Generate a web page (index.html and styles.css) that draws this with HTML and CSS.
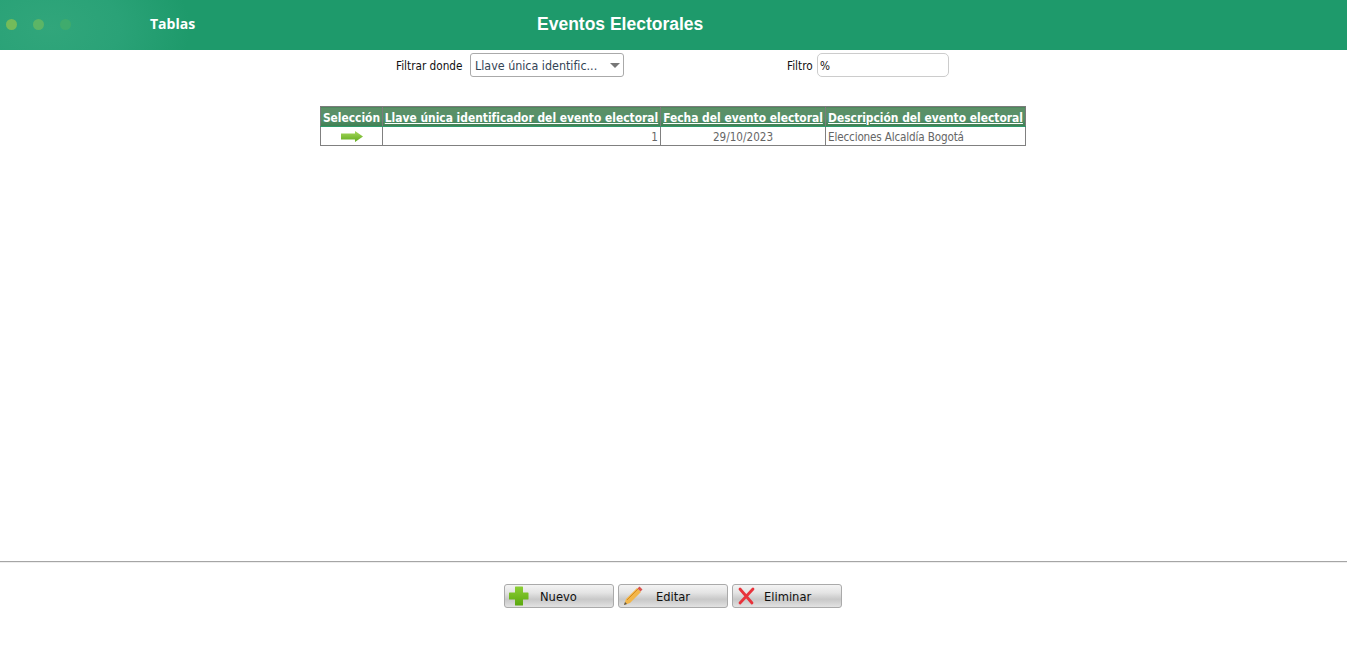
FILE: index.html
```html
<!DOCTYPE html>
<html lang="es">
<head>
<meta charset="utf-8">
<title>Eventos Electorales</title>
<link rel="stylesheet" href="styles.css">
</head>
<body>
<header class="topbar">
  <div class="dots"><span class="dot d1"></span><span class="dot d2"></span><span class="dot d3"></span></div>
  <span class="menu">Tablas</span>
  <h1 class="title">Eventos Electorales</h1>
</header>
<main class="main">
  <div class="filters">
    <label class="flabel">Filtrar donde</label>
    <div class="select"><span>Llave única identific...</span><i class="caret"></i></div>
    <label class="flabel second">Filtro</label>
    <div class="input">%</div>
  </div>
  <table class="grid">
    <thead>
      <tr>
        <th class="c1">Selección</th>
        <th class="c2"><u>Llave única identificador del evento electoral</u></th>
        <th class="c3"><u>Fecha del evento electoral</u></th>
        <th class="c4"><u>Descripción del evento electoral</u></th>
      </tr>
    </thead>
    <tbody>
      <tr>
        <td class="center"><svg class="arrow" width="22" height="11" viewBox="0 0 22 11"><defs><linearGradient id="ag" x1="0" y1="0" x2="0" y2="1"><stop offset="0" stop-color="#a6d85c"/><stop offset="1" stop-color="#62ab1e"/></linearGradient></defs><path d="M0 2.500h14V0l8 5.500-8 5.500V8.500H0z" fill="url(#ag)"/></svg></td>
        <td class="right">1</td>
        <td class="center">29/10/2023</td>
        <td class="desc">Elecciones Alcaldía Bogotá</td>
      </tr>
    </tbody>
  </table>
</main>
<footer class="footer">
  <button class="btn"><svg class="ico" width="20" height="20" viewBox="0 0 20 20"><defs><linearGradient id="pg" x1="0" y1="0" x2="0" y2="1"><stop offset="0" stop-color="#8ccf35"/><stop offset="1" stop-color="#5ba80f"/></linearGradient></defs><path d="M6.600 0.500h6.800a.6.6 0 0 1 .6.6V6.500h4.900a.6.6 0 0 1 .6.6v5.800a.6.6 0 0 1-.6.6H14v5.400a.6.6 0 0 1-.6.6H6.600a.6.6 0 0 1-.6-.6V13.500H.6a.6.6 0 0 1-.6-.6V7.100a.6.6 0 0 1 .6-.6H6V1.100a.6.6 0 0 1 .6-.6z" fill="url(#pg)"/></svg><span class="lbl l1">Nuevo</span></button>
  <button class="btn"><svg class="ico" width="20" height="20" viewBox="0 0 20 20"><path d="M1 19l2-6L14 2l4 4L7 17z" fill="#f2b64a"/><path d="M1 19l1-3 2 2z" fill="#555"/><path d="M14.500 2.500l2-2 3 3-2 2z" fill="#d9534f"/><path d="M4 14L15 3" stroke="#d68a1e" stroke-width="1"/></svg><span class="lbl l2">Editar</span></button>
  <button class="btn"><svg class="ico" width="20" height="20" viewBox="0 0 20 20"><path d="M3 3l12 14M16 3L3 17" stroke="#e8333b" stroke-width="2.800" stroke-linecap="round"/></svg><span class="lbl l3">Eliminar</span></button>
</footer>
</body>
</html>
```
FILE: styles.css
```css
* { box-sizing: border-box; }
html, body { margin: 0; padding: 0; }
body { width: 1347px; height: 646px; background: #fff; font-family: "DejaVu Sans Condensed", "DejaVu Sans", sans-serif; font-size: 12px; overflow: hidden; }

.topbar { height: 50px; display: flex; align-items: center; background: radial-gradient(ellipse 140px 90px at 50px 28px, #31a67b 0%, #2aa277 50%, #1e9a6b 100%), #1e9a6b; color: #fff; }
.dots { display: flex; gap: 16px; margin: 0 0 2px 6px; width: 144px; }
.dot { width: 11px; height: 11px; border-radius: 50%; }
.d1 { background: #74bb5a; }
.d2 { background: #5cb566; }
.d3 { background: #3fab6d; }
.menu { font-family: "Open Sans", sans-serif; font-weight: 700; font-size: 14px; width: 387px; margin-bottom: 3px; }
.title { margin: 0 0 1px; font-family: "Liberation Sans", sans-serif; font-size: 17.500px; font-weight: 700; }

.main { height: 512px; padding-top: 3px; border-bottom: 1px solid #a5a5a5; }
.filters { display: flex; align-items: center; height: 24px; margin-left: 396px; color: #111; font-size: 11.700px; }
.flabel { width: 74px; padding-top: 1px; }
.flabel.second { width: 30px; margin-left: 163px; }
.select { width: 154px; height: 24px; border: 1px solid #aaa; border-radius: 3px; padding: 1px 3px 0 4px; display: flex; align-items: center; justify-content: space-between; color: #345; font-size: 12.400px; }
.caret { width: 0; height: 0; border: 5px solid transparent; border-top-color: #777; border-bottom: 0; }
.input { width: 132px; height: 24px; border: 1px solid #ccc; border-radius: 5px; padding: 1px 2px 0; display: flex; align-items: center; }

.grid { margin: 29px 0 0 320px; width: 705px; table-layout: fixed; border-collapse: collapse; color: #666; font-size: 11.600px; }
.grid th { height: 20px; background: linear-gradient(#5c9066 0%, #55906a 60%, #3f7f52 100%); color: #fff; font-family: "DejaVu Sans Condensed", "DejaVu Sans", sans-serif; font-size: 11.900px; font-weight: 700; padding: 3px 0 0; border: 1px solid #7b7b7b; white-space: nowrap; overflow: hidden; border-bottom: 1px solid #2f9a6c; }
.grid td { height: 19px; padding: 1px 2px 0; border: 1px solid #808080; }
.c1 { width: 62px; }
.c2 { width: 278px; }
.c3 { width: 165px; }
.c4 { width: 200px; }
.center { text-align: center; }
.right { text-align: right; }
.desc { letter-spacing: -0.150px; }
.arrow { display: block; margin: 0 auto; }

.footer { display: flex; justify-content: center; gap: 4px; padding: 22px 1px 0 0; border-top: 1px solid #eee; }
.btn { position: relative; width: 110px; height: 24px; margin-top: -1px; padding: 0; border: 1px solid #aaa; border-radius: 3px; background: linear-gradient(#f4f4f4 0%, #e4e4e4 35%, #c8c8c8 65%, #e2e2e2 100%); font: inherit; font-size: 12.800px; color: #111; display: flex; align-items: center; }
.ico { margin-left: 4px; }
.lbl { margin-left: 11px; }
.l2 { margin-left: 13px; }
.l3 { margin-left: 7px; }
```
